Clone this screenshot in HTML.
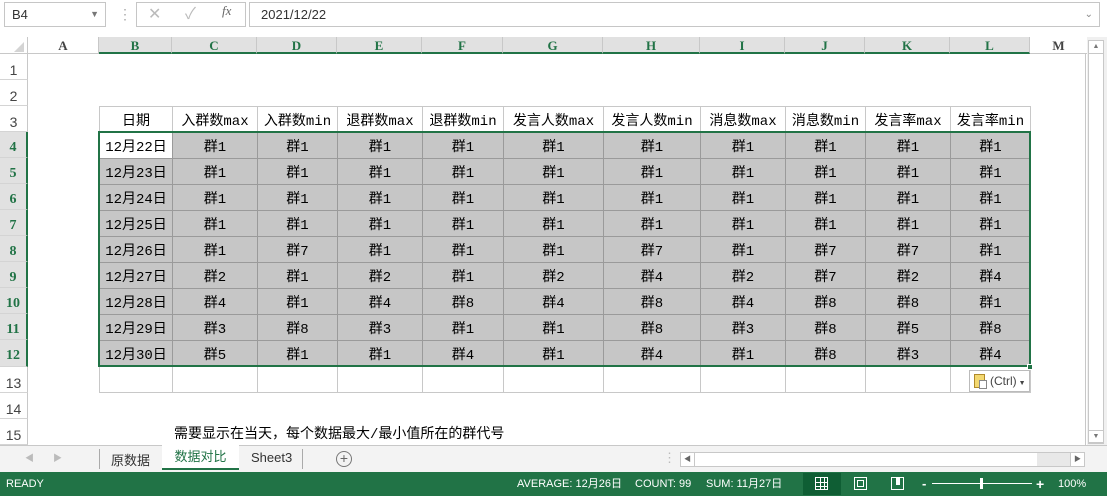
<!DOCTYPE html>
<html><head><meta charset="utf-8"><style>
*{margin:0;padding:0;box-sizing:border-box}
body{width:1107px;height:496px;overflow:hidden;background:#fff;font-family:"Liberation Sans","Noto Sans CJK SC",sans-serif;position:relative}
.a{position:absolute}
.cjk{font-family:"Liberation Mono","Noto Sans CJK SC",monospace}
.ch{position:absolute;top:37px;height:17px;font:bold 13px "Liberation Serif",serif;text-align:center;line-height:17px;color:#444;border-right:1px solid #c8c8c8}
.ch.s{background:#e1e1e1;color:#217346;border-bottom:2px solid #217346}
.rh{position:absolute;left:0;width:28px;font-size:14px;color:#444;text-align:center;border-bottom:1px solid #d4d4d4;border-right:1px solid #c8c8c8;padding-top:8px}
.rh.s{background:#e1e1e1;color:#217346;font:bold 14px "Liberation Serif",serif;border-right:2px solid #217346}
table{position:absolute;left:99px;top:106px;border-collapse:collapse;table-layout:fixed}
td{border:1px solid #9a9a9a;height:26px;text-align:center;font-size:14px;font-family:"Liberation Mono","Noto Sans CJK SC",monospace;padding:0;white-space:nowrap;overflow:hidden}
tr.h td{background:#fff;border-color:#c8c8c8}
tr.d td{background:#c6c6c6}
tr.e td{background:#fff;border-color:#c8c8c8}
</style></head><body>
<!-- formula bar -->
<div class="a" style="left:0;top:0;width:1107px;height:30px;background:#fff"></div>
<div class="a" style="left:4px;top:2px;width:102px;height:25px;border:1px solid #c6c6c6;font-size:13px;line-height:23px;padding-left:7px;color:#333">B4<span style="position:absolute;right:6px;top:0;font-size:9px;color:#777">▼</span></div>
<div class="a" style="left:118px;top:6px;color:#aaa;font-size:14px">⋮</div>
<div class="a" style="left:136px;top:2px;width:110px;height:25px;border:1px solid #c6c6c6;color:#bbb;font-size:16px;line-height:23px"><span style="position:absolute;left:11px">✕</span><span style="position:absolute;left:48px">✓</span><span style="position:absolute;left:85px;font:italic 13px 'Liberation Serif',serif;color:#666">fx</span></div>
<div class="a" style="left:249px;top:2px;width:851px;height:25px;border:1px solid #c6c6c6;font-size:13px;line-height:23px;padding-left:11px;color:#333">2021/12/22<span style="position:absolute;right:6px;top:0;font-size:10px;color:#888">⌄</span></div>
<!-- column headers -->
<div class="a" style="left:0;top:37px;width:1087px;height:17px;border-bottom:1px solid #c8c8c8"></div>
<div class="ch" style="left:0;width:28px"></div>
<div class="a" style="left:14px;top:42px;width:0;height:0;border-left:10px solid transparent;border-bottom:10px solid #d4d4d4"></div>
<div class="ch" style="left:28px;width:71px">A</div>
<div class="ch s" style="left:99px;width:73px">B</div>
<div class="ch s" style="left:172px;width:85px">C</div>
<div class="ch s" style="left:257px;width:80px">D</div>
<div class="ch s" style="left:337px;width:85px">E</div>
<div class="ch s" style="left:422px;width:81px">F</div>
<div class="ch s" style="left:503px;width:100px">G</div>
<div class="ch s" style="left:603px;width:97px">H</div>
<div class="ch s" style="left:700px;width:85px">I</div>
<div class="ch s" style="left:785px;width:80px">J</div>
<div class="ch s" style="left:865px;width:85px">K</div>
<div class="ch s" style="left:950px;width:80px">L</div>
<div class="ch" style="left:1030px;width:57px;border-right:none">M</div>
<!-- row headers -->
<div class="rh" style="top:54px;height:26px">1</div>
<div class="rh" style="top:80px;height:26px">2</div>
<div class="rh" style="top:106px;height:26px">3</div>
<div class="rh s" style="top:132px;height:26px">4</div>
<div class="rh s" style="top:158px;height:26px">5</div>
<div class="rh s" style="top:184px;height:26px">6</div>
<div class="rh s" style="top:210px;height:26px">7</div>
<div class="rh s" style="top:236px;height:26px">8</div>
<div class="rh s" style="top:262px;height:26px">9</div>
<div class="rh s" style="top:288px;height:26px">10</div>
<div class="rh s" style="top:314px;height:26px">11</div>
<div class="rh s" style="top:340px;height:27px">12</div>
<div class="rh" style="top:367px;height:26px">13</div>
<div class="rh" style="top:393px;height:26px">14</div>
<div class="rh" style="top:419px;height:26px">15</div>
<!-- grid right border line -->
<div class="a" style="left:1085px;top:54px;width:1px;height:391px;background:#c8c8c8"></div>
<table>
<colgroup><col style="width:73px"><col style="width:85px"><col style="width:80px"><col style="width:85px"><col style="width:81px"><col style="width:100px"><col style="width:97px"><col style="width:85px"><col style="width:80px"><col style="width:85px"><col style="width:80px"></colgroup>
<tr class="h"><td>日期</td><td>入群数max</td><td>入群数min</td><td>退群数max</td><td>退群数min</td><td>发言人数max</td><td>发言人数min</td><td>消息数max</td><td>消息数min</td><td>发言率max</td><td>发言率min</td></tr>
<tr class="d"><td style="background:#fff">12月22日</td><td>群1</td><td>群1</td><td>群1</td><td>群1</td><td>群1</td><td>群1</td><td>群1</td><td>群1</td><td>群1</td><td>群1</td></tr>
<tr class="d"><td>12月23日</td><td>群1</td><td>群1</td><td>群1</td><td>群1</td><td>群1</td><td>群1</td><td>群1</td><td>群1</td><td>群1</td><td>群1</td></tr>
<tr class="d"><td>12月24日</td><td>群1</td><td>群1</td><td>群1</td><td>群1</td><td>群1</td><td>群1</td><td>群1</td><td>群1</td><td>群1</td><td>群1</td></tr>
<tr class="d"><td>12月25日</td><td>群1</td><td>群1</td><td>群1</td><td>群1</td><td>群1</td><td>群1</td><td>群1</td><td>群1</td><td>群1</td><td>群1</td></tr>
<tr class="d"><td>12月26日</td><td>群1</td><td>群7</td><td>群1</td><td>群1</td><td>群1</td><td>群7</td><td>群1</td><td>群7</td><td>群7</td><td>群1</td></tr>
<tr class="d"><td>12月27日</td><td>群2</td><td>群1</td><td>群2</td><td>群1</td><td>群2</td><td>群4</td><td>群2</td><td>群7</td><td>群2</td><td>群4</td></tr>
<tr class="d"><td>12月28日</td><td>群4</td><td>群1</td><td>群4</td><td>群8</td><td>群4</td><td>群8</td><td>群4</td><td>群8</td><td>群8</td><td>群1</td></tr>
<tr class="d"><td>12月29日</td><td>群3</td><td>群8</td><td>群3</td><td>群1</td><td>群1</td><td>群8</td><td>群3</td><td>群8</td><td>群5</td><td>群8</td></tr>
<tr class="d"><td>12月30日</td><td>群5</td><td>群1</td><td>群1</td><td>群4</td><td>群1</td><td>群4</td><td>群1</td><td>群8</td><td>群3</td><td>群4</td></tr>
<tr class="e"><td></td><td></td><td></td><td></td><td></td><td></td><td></td><td></td><td></td><td></td><td></td></tr>
</table>
<!-- selection border -->
<div class="a" style="left:98px;top:131px;width:933px;height:236px;border:2px solid #217346"></div>
<div class="a" style="left:1027px;top:364px;width:6px;height:6px;background:#217346;border:1px solid #fff"></div>
<!-- paste options -->
<div class="a" style="left:969px;top:370px;width:61px;height:22px;background:#fff;border:1px solid #bbb;font-size:12px;line-height:20px;color:#444;padding-left:20px">(Ctrl)<span style="font-size:7px"> ▼</span>
<div class="a" style="left:4px;top:3px;width:11px;height:14px;background:#f3d870;border:1px solid #b08a2a"></div><div class="a" style="left:9px;top:9px;width:8px;height:9px;background:#fff;border:1px solid #888"></div></div>
<div class="a cjk" style="left:174px;top:423px;font-size:14px;color:#000">需要显示在当天，每个数据最大/最小值所在的群代号</div>
<!-- vertical scrollbar -->
<div class="a" style="left:1087px;top:37px;width:20px;height:408px;background:#f0f0f0"></div>
<div class="a" style="left:1088px;top:40px;width:16px;height:403px;background:#fff;border:1px solid #c8c8c8"></div>
<div class="a" style="left:1088px;top:40px;width:16px;height:14px;border:1px solid #c8c8c8;font-size:7px;color:#777;text-align:center;line-height:12px">▲</div>
<div class="a" style="left:1088px;top:430px;width:16px;height:14px;border:1px solid #c8c8c8;font-size:7px;color:#777;text-align:center;line-height:12px">▼</div>
<!-- tabs bar -->
<div class="a" style="left:0;top:445px;width:1107px;height:27px;background:#f3f3f3;border-top:1px solid #c8c8c8"></div>
<div class="a" style="left:25px;top:451px;font-size:9px;color:#bbb">◀</div>
<div class="a" style="left:53px;top:451px;font-size:9px;color:#bbb">▶</div>
<div class="a" style="left:99px;top:449px;width:1px;height:20px;background:#aaa"></div>
<div class="a" style="left:111px;top:450px;font-size:13px;color:#333">原数据</div>
<div class="a" style="left:162px;top:445px;width:77px;height:25px;background:#fff;border-bottom:2px solid #217346;font-size:13px;color:#217346;text-align:center;line-height:24px">数据对比</div>
<div class="a" style="left:251px;top:450px;font-size:13px;color:#333">Sheet3</div>
<div class="a" style="left:302px;top:449px;width:1px;height:20px;background:#aaa"></div>
<div class="a" style="left:336px;top:451px;width:16px;height:16px;border:1px solid #777;border-radius:50%;text-align:center;font-size:14px;line-height:13px;color:#666">+</div>
<div class="a" style="left:663px;top:450px;font-size:13px;color:#bbb">⋮</div>
<div class="a" style="left:680px;top:452px;width:405px;height:15px;background:#fff;border:1px solid #c8c8c8"></div>
<div class="a" style="left:680px;top:452px;width:15px;height:15px;border:1px solid #c8c8c8;font-size:7px;color:#666;text-align:center;line-height:13px">◀</div>
<div class="a" style="left:1037px;top:453px;width:33px;height:13px;background:#e8e8e8"></div>
<div class="a" style="left:1070px;top:452px;width:15px;height:15px;border:1px solid #c8c8c8;font-size:7px;color:#666;text-align:center;line-height:13px">▶</div>
<!-- status bar -->
<div class="a" style="left:0;top:472px;width:1107px;height:24px;background:#217346;color:#fff;font-size:11px;line-height:24px">
<span class="a" style="left:6px">READY</span>
<span class="a" style="left:517px">AVERAGE: 12月26日</span>
<span class="a" style="left:635px">COUNT: 99</span>
<span class="a" style="left:706px">SUM: 11月27日</span>
<div class="a" style="left:803px;top:1px;width:38px;height:22px;background:#0f5e34"></div>
<div class="a" style="left:815px;top:5px;width:13px;height:13px;border:1px solid #fff;background:linear-gradient(#fff,#fff) 4px 0/1px 100% no-repeat,linear-gradient(#fff,#fff) 8px 0/1px 100% no-repeat,linear-gradient(#fff,#fff) 0 4px/100% 1px no-repeat,linear-gradient(#fff,#fff) 0 8px/100% 1px no-repeat"></div>
<div class="a" style="left:854px;top:5px;width:13px;height:13px;border:1px solid #fff"><div class="a" style="left:2px;top:2px;width:7px;height:7px;border:1px solid #fff"></div></div>
<div class="a" style="left:891px;top:5px;width:13px;height:13px;border:1px solid #fff"><div class="a" style="left:4px;top:-1px;width:4px;height:8px;background:#fff"></div></div>
<span class="a" style="left:922px;font-size:13px;font-weight:bold">-</span>
<div class="a" style="left:932px;top:11px;width:100px;height:1px;background:#fff"></div>
<div class="a" style="left:980px;top:6px;width:3px;height:11px;background:#fff"></div>
<span class="a" style="left:1036px;font-size:14px;font-weight:bold">+</span>
<span class="a" style="left:1058px">100%</span>
</div>
</body></html>
